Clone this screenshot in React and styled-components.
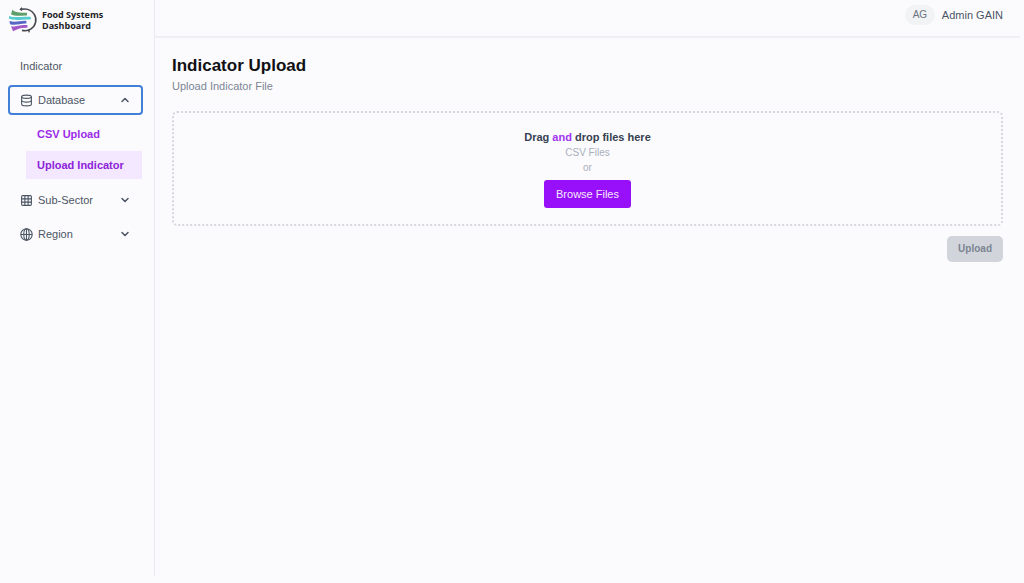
import React, { useRef, useState } from "react";
import styled, { createGlobalStyle, css } from "styled-components";
import { ChevronDown, ChevronUp, Database, Grid3x3 } from "lucide-react";

const GlobalStyle = createGlobalStyle`
  *, *::before, *::after { box-sizing: border-box; }
  body {
    margin: 0;
    background: #fbfbfe;
    color: #4b5563;
    font: 11px/16px "Liberation Sans", Arial, sans-serif;
  }
  button { font: inherit; color: inherit; }
`;

const Page = styled.div`
  display: grid;
  grid-template-columns: 155px 1fr;
  min-height: 100vh;
  padding: 0 4px 7px 0;
`;

const Sidebar = styled.aside`
  border-right: 1px solid #eaebef;
`;

const Brand = styled.a`
  display: flex;
  align-items: center;
  gap: 4px;
  height: 40px;
  padding-left: 8px;
  color: #222326;
  font: 700 9px/11px "Open Sans", "Noto Sans", sans-serif;
  text-decoration: none;
`;

const BrandName = styled.span`
  width: 72px;
`;

const SectionLabel = styled.h2`
  margin: 18px 0 11px 20px;
  font-size: 11px;
  font-weight: 400;
  line-height: 16px;
`;

const Nav = styled.nav`
  display: flex;
  flex-direction: column;
  gap: 4px;
  padding: 0 11px 0 8px;
`;

const NavButton = styled.button`
  display: flex;
  align-items: center;
  gap: 5px;
  width: 100%;
  height: 30px;
  padding: 0 10px;
  border: 2px solid ${(p) => (p.$active ? "#427fd6" : "transparent")};
  border-radius: 4px;
  background: transparent;
  text-align: left;
  cursor: pointer;
`;

const NavText = styled.span`
  flex: 1;
`;

const SubNav = styled.div`
  display: flex;
  flex-direction: column;
  gap: 3px;
  padding: 1px 1px 2px 18px;
`;

const SubLink = styled.a`
  padding: 6px 11px;
  color: #9b2be8;
  font-weight: 700;
  text-decoration: none;
  ${(p) =>
    p.$current &&
    css`
      background: #f3e8ff;
      color: #8d22d8;
    `}
`;

const Header = styled.header`
  display: flex;
  justify-content: flex-end;
  align-items: center;
  gap: 7px;
  height: 38px;
  padding: 0 17px 6px;
  border-bottom: 2px solid #eff0f3;
`;

const Avatar = styled.span`
  width: 30px;
  border-radius: 10px;
  background: #f1f3f5;
  color: #6b7280;
  font-size: 10px;
  line-height: 20px;
  text-align: center;
`;

const Main = styled.main`
  padding: 17px 17px 0;
`;

const Title = styled.h1`
  margin: 0;
  color: #111114;
  font-size: 17px;
  line-height: 22px;
`;

const Subtitle = styled.p`
  margin: 0 0 16px;
  color: #7c8594;
  line-height: 18px;
`;

const DropZone = styled.section`
  display: flex;
  flex-direction: column;
  align-items: center;
  padding: 16px 16px;
  border: 2px dotted #d5d8dd;
  border-radius: 5px;
`;

const DropTitle = styled.p`
  margin: 0;
  color: #374151;
  font-weight: 700;
`;

const Accent = styled.span`
  color: #a234ee;
`;

const Hint = styled.p`
  margin: 0;
  color: #a9afba;
  font-size: 10px;
  line-height: 15px;
`;

const BrowseButton = styled.button`
  height: 28px;
  margin-top: 5px;
  padding: 0 12px;
  border: 0;
  border-radius: 3px;
  background: #9810fa;
  color: #f5e9ff;
  cursor: pointer;
`;

const Actions = styled.div`
  display: flex;
  justify-content: flex-end;
  margin-top: 10px;
`;

const UploadButton = styled.button`
  height: 26px;
  padding: 0 11px;
  border: 0;
  border-radius: 5px;
  background: #d1d5db;
  color: #7b8491;
  font-size: 10px;
  font-weight: 700;
`;

function Logo() {
  return (
    <svg width="30" height="26" viewBox="0 0 30 26" fill="none" aria-hidden="true">
      <path d="M13 2.300C18 1.200 23.500 2.800 26.300 7.300c3.100 5 1.500 11.500-3.600 14.900-2.500 1.600-5.600 1.800-8.700 1.200" stroke="#44474c" strokeWidth="1.600" />
      <path d="M14 .8l-1.500 1.600 1.500 1M20.800 22.500l.4 2.800" stroke="#44474c" strokeWidth="1.400" />
      <path d="M4.500 2.500C6 5.200 10 5.900 19 5.700v2.700C12 8.500 7 9.600 3 7.200z" fill="#5f9e69" />
      <path d="M1.200 8.900c5 2.200 10 .7 21.600 1v2.600C14 12.200 8 14 1 11.800z" fill="#55cdcf" />
      <path d="M1.500 14c6 2 10-.4 16.900-.1v2.600C12 16.200 8 18.900 2 17.200z" fill="#5767c3" />
      <path d="M3 19.300c5 .8 7.500-1.600 16.400-1.300v2.700c-6-.2-9 .600-14.400 3.600z" fill="#a257c6" />
    </svg>
  );
}

function Globe() {
  return (
    <svg width="13" height="13" viewBox="0 0 24 24" fill="none" stroke="currentColor" strokeWidth="2" aria-hidden="true">
      <circle cx="12" cy="12" r="10.500" />
      <ellipse cx="12" cy="12" rx="5" ry="10.500" />
      <path d="M1.500 12h21M12 1.500v21" />
    </svg>
  );
}

const icon = { size: 13, strokeWidth: 2, "aria-hidden": true };
const chevron = { size: 12, strokeWidth: 3, "aria-hidden": true };

export default function App() {
  const [open, setOpen] = useState(true);
  const fileInput = useRef(null);

  return (
    <>
      <GlobalStyle />
      <Page>
        <Sidebar>
          <Brand href="#home">
            <Logo />
            <BrandName>Food Systems Dashboard</BrandName>
          </Brand>
          <SectionLabel>Indicator</SectionLabel>
          <Nav aria-label="Indicator">
            <NavButton $active type="button" aria-expanded={open} onClick={() => setOpen(!open)}>
              <Database {...icon} />
              <NavText>Database</NavText>
              {open ? <ChevronUp {...chevron} /> : <ChevronDown {...chevron} />}
            </NavButton>
            {open && (
              <SubNav>
                <SubLink href="#csv">CSV Upload</SubLink>
                <SubLink href="#indicator" $current aria-current="page">Upload Indicator</SubLink>
              </SubNav>
            )}
            <NavButton type="button" aria-expanded={false}>
              <Grid3x3 {...icon} />
              <NavText>Sub-Sector</NavText>
              <ChevronDown {...chevron} />
            </NavButton>
            <NavButton type="button" aria-expanded={false}>
              <Globe />
              <NavText>Region</NavText>
              <ChevronDown {...chevron} />
            </NavButton>
          </Nav>
        </Sidebar>
        <div>
          <Header>
            <Avatar>AG</Avatar>
            <span>Admin GAIN</span>
          </Header>
          <Main>
            <Title>Indicator Upload</Title>
            <Subtitle>Upload Indicator File</Subtitle>
            <DropZone>
              <DropTitle>
                Drag <Accent>and</Accent> drop files here
              </DropTitle>
              <Hint>CSV Files</Hint>
              <Hint>or</Hint>
              <BrowseButton type="button" onClick={() => fileInput.current.click()}>
                Browse Files
              </BrowseButton>
              <input ref={fileInput} type="file" accept=".csv" aria-label="CSV file" hidden />
            </DropZone>
            <Actions>
              <UploadButton type="button" disabled>Upload</UploadButton>
            </Actions>
          </Main>
        </div>
      </Page>
    </>
  );
}
